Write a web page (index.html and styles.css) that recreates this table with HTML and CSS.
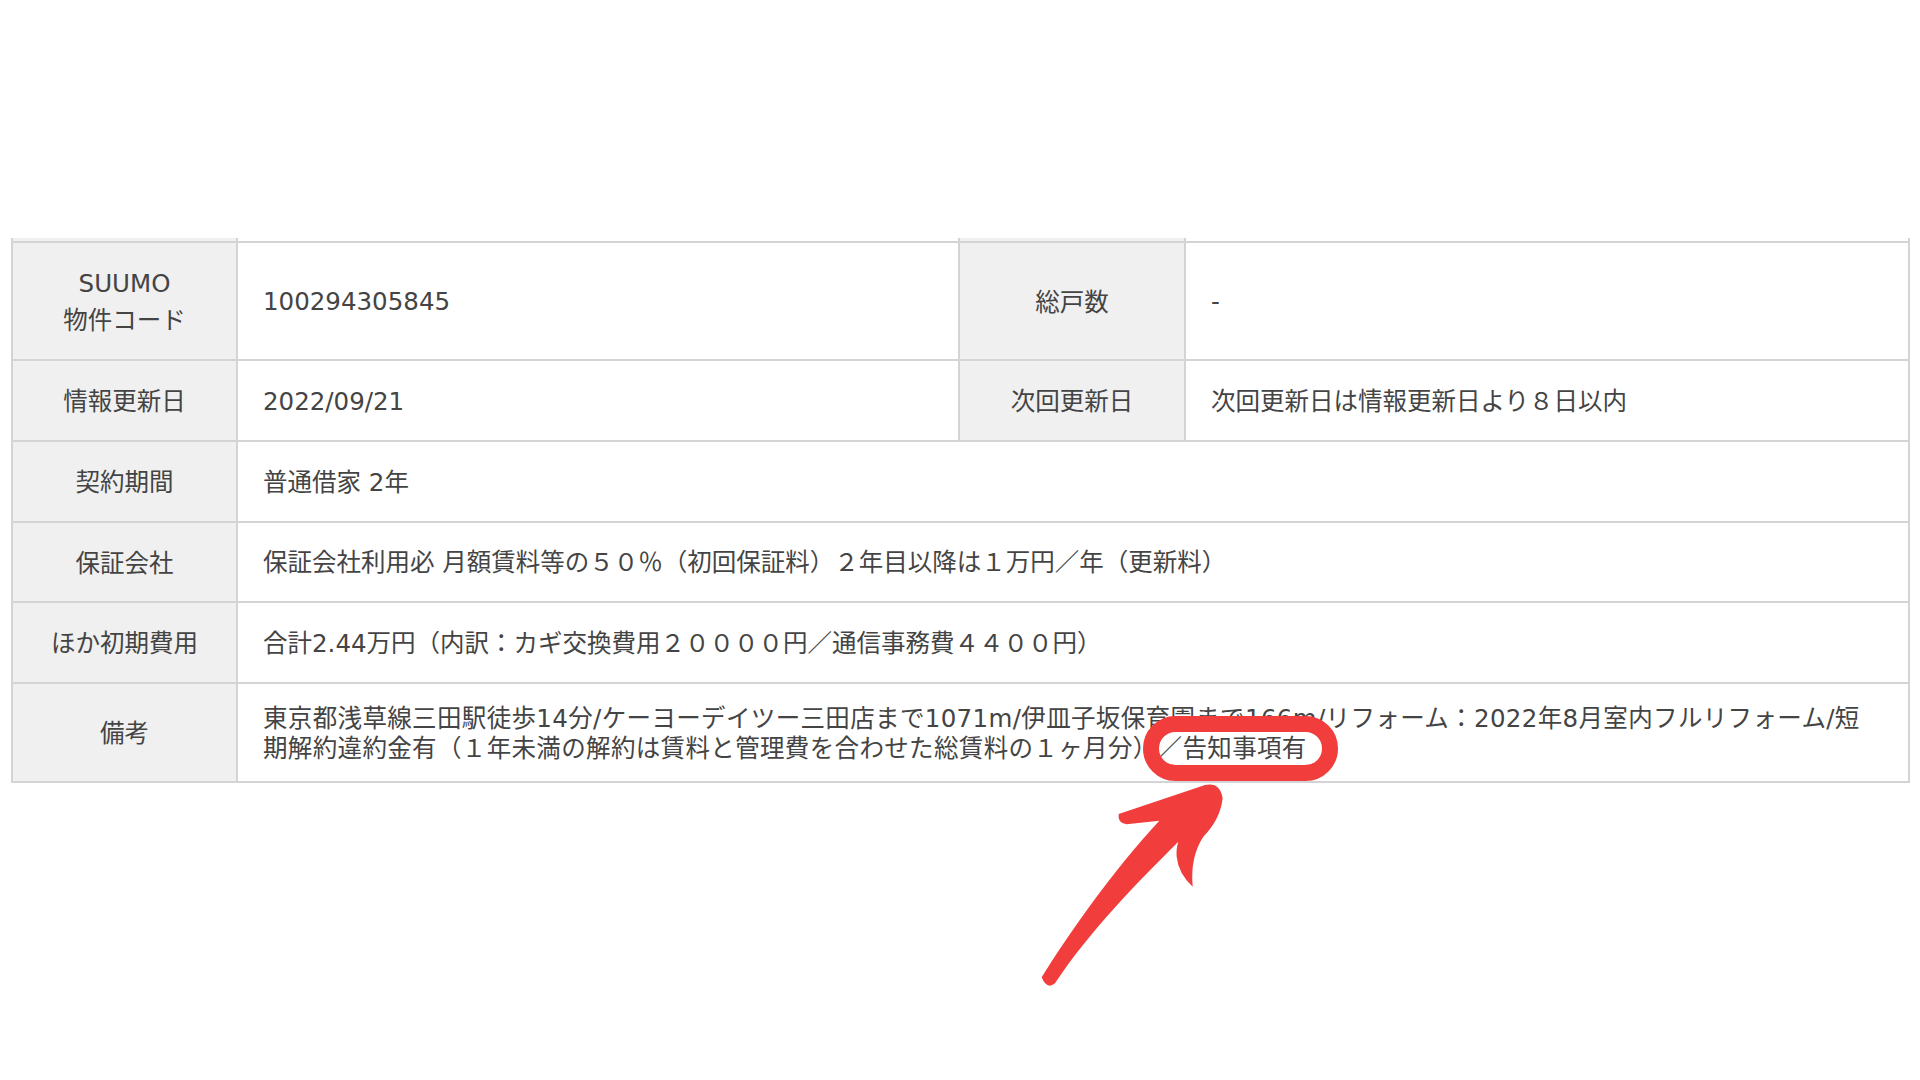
FILE: index.html
```html
<!DOCTYPE html>
<html lang="ja">
<head>
<meta charset="utf-8">
<title>物件情報</title>
<link rel="stylesheet" href="styles.css">
</head>
<body>
<div class="page">
  <table class="spec">
    <colgroup>
      <col class="c-th"><col class="c-td"><col class="c-th2"><col class="c-td2">
    </colgroup>
    <tr class="cut"><th></th><td></td><th></th><td></td></tr>
    <tr class="r1">
      <th class="multi">SUUMO<br>物件コード</th>
      <td>100294305845</td>
      <th>総戸数</th>
      <td>-</td>
    </tr>
    <tr class="r2">
      <th>情報更新日</th>
      <td>2022/09/21</td>
      <th>次回更新日</th>
      <td>次回更新日は情報更新日より８日以内</td>
    </tr>
    <tr class="r3">
      <th>契約期間</th>
      <td colspan="3">普通借家 2年</td>
    </tr>
    <tr class="r4">
      <th>保証会社</th>
      <td colspan="3">保証会社利用必 月額賃料等の５０％（初回保証料）２年目以降は１万円／年（更新料）</td>
    </tr>
    <tr class="r5">
      <th>ほか初期費用</th>
      <td colspan="3">合計2.44万円（内訳：カギ交換費用２００００円／通信事務費４４００円）</td>
    </tr>
    <tr class="r6">
      <th>備考</th>
      <td colspan="3" class="note">東京都浅草線三田駅徒歩14分/ケーヨーデイツー三田店まで1071m/伊皿子坂保育園まで166m/リフォーム：2022年8月室内フルリフォーム/短<br>期解約違約金有（１年未満の解約は賃料と管理費を合わせた総賃料の１ヶ月分）／告知事項有</td>
    </tr>
  </table>

  <div class="ring"></div>
  <svg class="arrow" viewBox="0 0 600 660" width="200" height="220" aria-hidden="true">
    <path d="M 35 622 C 110 500, 250 300, 388 152 L 290 163 Q 262 160, 266 132 L 525 45 Q 570 35, 578 85 Q 570 150, 520 200 Q 480 260, 488 350 Q 445 310, 440 260 Q 438 235, 445 215 C 330 330, 180 480, 75 640 Q 50 660, 35 622 Z" fill="#f23d3d"/>
  </svg>
</div>
</body>
</html>
```

FILE: styles.css
```css
* { box-sizing: border-box; }

html, body {
  margin: 0;
  padding: 0;
  background: #ffffff;
}

.page {
  position: relative;
  width: 1920px;
  height: 1080px;
  padding-top: 238px;
  padding-left: 11px;
  font-family: "DejaVu Sans", "Noto Sans CJK JP", sans-serif;
  color: #444444;
}

.spec {
  border-collapse: collapse;
  table-layout: fixed;
  width: 1897px;
  font-size: 24.5px;
}

.c-th { width: 225px; }
.c-td { width: 722px; }
.c-th2 { width: 226px; }
.c-td2 { width: 724px; }

.spec th,
.spec td {
  border: 2px solid #d4d4d4;
  vertical-align: middle;
  padding: 2px 0 0 0;
}

.spec th {
  background: #f0f0f0;
  font-weight: 400;
  text-align: center;
  line-height: 37px;
}

.spec td {
  background: #ffffff;
  text-align: left;
  padding-left: 25px;
  padding-right: 20px;
  line-height: 30px;
}

.spec .cut th,
.spec .cut td {
  border-top: none;
  height: 4px;
  line-height: 0;
  padding: 0;
}

.spec .cut td { background: #ffffff; }

.r1 { height: 118px; }
.r2 { height: 81px; }
.r3 { height: 81px; }
.r4 { height: 80px; }
.r5 { height: 81px; }
.r6 { height: 99px; }

.note {
  white-space: nowrap;
  letter-spacing: 0.35px;
}

.ring {
  position: absolute;
  left: 1143px;
  top: 716px;
  width: 195px;
  height: 65px;
  border: 16px solid #f23d3d;
  border-radius: 33px;
}

.arrow {
  position: absolute;
  left: 1030px;
  top: 770px;
  display: block;
}
```
